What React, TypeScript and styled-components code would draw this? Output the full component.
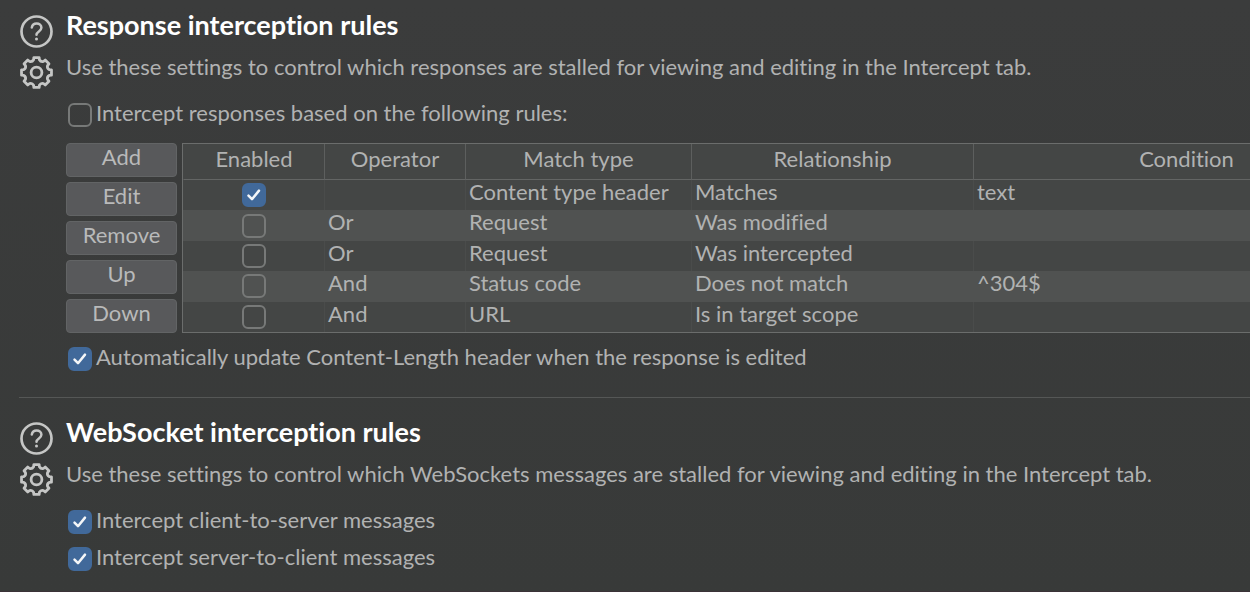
import React, { useState } from "react";
import styled, { createGlobalStyle } from "styled-components";

const GlobalStyle = createGlobalStyle`
  *, *::before, *::after { box-sizing: border-box; }
  html { background: #383a39; }
  body {
    margin: 0;
    background: linear-gradient(#3b3c3c, #383a39);
    color: #b1b2b2;
    font-family: Lato, "Liberation Sans", sans-serif;
    font-size: 22px;
    line-height: 28px;
    font-variant-ligatures: none;
    overflow-x: hidden;
  }
`;

const Page = styled.main`
  padding-left: 19px;
  min-height: 100vh;
  border-bottom: 1px solid #3b3238;
`;

const Section = styled.section<{ $divided?: boolean }>`
  display: grid;
  grid-template-columns: 47px minmax(0, 1fr);
  padding: ${(p) => (p.$divided ? "18px 0 16px" : "9px 0 22px")};
  border-top: ${(p) => (p.$divided ? "1px solid #555756" : "none")};
`;

const IconColumn = styled.div`
  display: flex;
  flex-direction: column;
  gap: 8px;
  padding: 6px 0 0 1px;
`;

const IconButton = styled.button`
  display: block;
  width: 33px;
  height: 33px;
  padding: 0;
  border: 0;
  background: none;
  color: #c5c6c5;

  svg {
    display: block;
    fill: none;
    stroke: currentColor;
    stroke-linecap: round;
    stroke-linejoin: round;
  }
`;

const Heading = styled.h2`
  margin: 0 0 12px;
  color: #fff;
  font-size: 27px;
  line-height: 32px;
  font-weight: 700;
`;

const Description = styled.p`
  margin: 0 0 18px;
`;

const Options = styled.div`
  display: flex;
  flex-direction: column;
  gap: 5px;
`;

const OptionLabel = styled.label`
  display: flex;
  align-items: center;
  gap: 4px;
  height: 32px;
  padding-left: 2px;
`;

const OptionText = styled.span`
  padding-bottom: 4px;
`;

const CheckWrap = styled.span`
  display: inline-grid;
  flex: none;
  width: 24px;
  height: 24px;
  vertical-align: top;

  > * { grid-area: 1 / 1; }

  svg { pointer-events: none; }
`;

const CheckInput = styled.input`
  appearance: none;
  width: 24px;
  height: 24px;
  margin: 0;
  border: 2px solid #777978;
  border-radius: 6px;

  &:checked {
    border-color: #41699a;
    background: #41699a;
  }
`;

const RulesEditor = styled.div`
  display: grid;
  grid-template-columns: 111px minmax(0, 1fr);
  gap: 5px;
  margin: 12px 0 10px;
`;

const ButtonColumn = styled.div`
  display: flex;
  flex-direction: column;
  gap: 5px;
`;

const ActionButton = styled.button`
  height: 34px;
  padding: 0 0 6px;
  border: 1px solid #626465;
  border-radius: 4px;
  background: #58595b;
  color: #b9baba;
  font: inherit;
  line-height: 26px;
`;

const TablePane = styled.div`
  overflow: hidden;
  border: 1px solid #6b6d6c;
  border-right: 0;
`;

const RulesTable = styled.table`
  table-layout: fixed;
  width: 1216px;
  height: 188px;
  border-collapse: separate;
  border-spacing: 0;
  background: #444645;
`;

const HeaderCell = styled.th<{ $width: number }>`
  width: ${(p) => p.$width}px;
  height: 36px;
  padding: 0 0 4px;
  border-left: 1px solid #5d5f5e;
  border-bottom: 1px solid #636564;
  font-weight: 400;
  line-height: 26px;
  vertical-align: middle;
  padding-bottom: 5px;

  &:first-child { border-left-color: transparent; }
`;

const Row = styled.tr`
  &:nth-child(even) { background: #505251; }
`;

const Cell = styled.td`
  padding: 0 0 0 3px;
  border-left: 1px solid #4a4c4b;
  line-height: 24px;
  vertical-align: top;
  white-space: nowrap;

  ${Row}:nth-child(even) & { border-left-color: transparent; }
`;

const CheckCell = styled.td`
  padding: 0;
  line-height: 24px;
  text-align: center;
  vertical-align: middle;
`;

type CheckBoxProps = { initial: boolean; id?: string; label?: string };

function CheckBox({ initial, id, label }: CheckBoxProps) {
  const [checked, setChecked] = useState(initial);
  return (
    <CheckWrap>
      <CheckInput
        type="checkbox"
        id={id}
        aria-label={label}
        checked={checked}
        onChange={(e) => setChecked(e.target.checked)}
      />
      {checked && (
        <svg width="24" height="24" viewBox="0 0 24 24" fill="none" aria-hidden="true">
          <path d="M6.5 12.6 10 16.2 17 7.6" stroke="#f4f6f8" strokeWidth="2.5" strokeLinecap="round" strokeLinejoin="round" />
        </svg>
      )}
    </CheckWrap>
  );
}

function Option({ id, text, initial }: { id: string; text: string; initial: boolean }) {
  return (
    <OptionLabel htmlFor={id}>
      <CheckBox id={id} initial={initial} />
      <OptionText>{text}</OptionText>
    </OptionLabel>
  );
}

// Outline of an eight-toothed cog centred on 16.5,16.5.
function cogOutline() {
  const at = (radius: number, degrees: number) => {
    const a = (degrees * Math.PI) / 180;
    return `${(16.5 + radius * Math.sin(a)).toFixed(2)} ${(16.5 - radius * Math.cos(a)).toFixed(2)}`;
  };
  let d = `M${at(15.2, -10)}`;
  for (let i = 0; i < 8; i++) {
    const c = i * 45;
    d += ` L${at(15.2, c + 10)} L${at(13, c + 13)} Q${at(11.2, c + 22.5)} ${at(13, c + 32)} L${at(15.2, c + 35)}`;
  }
  return `${d} Z`;
}

const COG = cogOutline();

function SectionIcons({ topic }: { topic: string }) {
  return (
    <IconColumn>
      <IconButton type="button" aria-label={`Help: ${topic}`}>
        <svg width="33" height="33" viewBox="0 0 33 33" strokeWidth="2.7">
          <circle cx="16.5" cy="16.5" r="15" />
          <path d="M11.8 12.6c.5-2.6 2.3-4 4.8-4 2.8 0 4.8 1.7 4.8 4.2 0 3.6-4.9 3.6-4.9 7" strokeWidth="2.5" />
          <path d="M16.5 24v.1" strokeWidth="3" />
        </svg>
      </IconButton>
      <IconButton type="button" aria-label={`Options: ${topic}`}>
        <svg width="33" height="33" viewBox="0 0 33 33" strokeWidth="2.8">
          <path d={COG} />
          <circle cx="16.5" cy="16.5" r="5.4" />
        </svg>
      </IconButton>
    </IconColumn>
  );
}

const COLUMNS = [
  { name: "Enabled", width: 141 },
  { name: "Operator", width: 141 },
  { name: "Match type", width: 226 },
  { name: "Relationship", width: 282 },
  { name: "Condition", width: 426 },
];

const RULES = [
  { on: true, cells: ["", "Content type header", "Matches", "text"] },
  { on: false, cells: ["Or", "Request", "Was modified", ""] },
  { on: false, cells: ["Or", "Request", "Was intercepted", ""] },
  { on: false, cells: ["And", "Status code", "Does not match", "^304$"] },
  { on: false, cells: ["And", "URL", "Is in target scope", ""] },
];

const ACTIONS = ["Add", "Edit", "Remove", "Up", "Down"];

export default function App() {
  return (
    <>
      <GlobalStyle />
      <Page>
        <Section>
          <SectionIcons topic="Response interception rules" />
          <div>
            <Heading>Response interception rules</Heading>
            <Description>
              Use these settings to control which responses are stalled for viewing and editing in the Intercept tab.
            </Description>
            <Option id="intercept-responses" text="Intercept responses based on the following rules:" initial={false} />
            <RulesEditor>
              <ButtonColumn>
                {ACTIONS.map((name) => (
                  <ActionButton key={name} type="button">{name}</ActionButton>
                ))}
              </ButtonColumn>
              <TablePane>
                <RulesTable>
                  <thead>
                    <tr>
                      {COLUMNS.map((c) => (
                        <HeaderCell key={c.name} scope="col" $width={c.width}>{c.name}</HeaderCell>
                      ))}
                    </tr>
                  </thead>
                  <tbody>
                    {RULES.map((rule, r) => (
                      <Row key={r}>
                        <CheckCell>
                          <CheckBox initial={rule.on} label={`Enable rule ${r + 1}`} />
                        </CheckCell>
                        {rule.cells.map((text, i) => (
                          <Cell key={i}>{text}</Cell>
                        ))}
                      </Row>
                    ))}
                  </tbody>
                </RulesTable>
              </TablePane>
            </RulesEditor>
            <Option
              id="update-length"
              text="Automatically update Content-Length header when the response is edited"
              initial
            />
          </div>
        </Section>
        <Section $divided>
          <SectionIcons topic="WebSocket interception rules" />
          <div>
            <Heading>WebSocket interception rules</Heading>
            <Description>
              Use these settings to control which WebSockets messages are stalled for viewing and editing in the Intercept tab.
            </Description>
            <Options>
              <Option id="client-to-server" text="Intercept client-to-server messages" initial />
              <Option id="server-to-client" text="Intercept server-to-client messages" initial />
            </Options>
          </div>
        </Section>
      </Page>
    </>
  );
}
